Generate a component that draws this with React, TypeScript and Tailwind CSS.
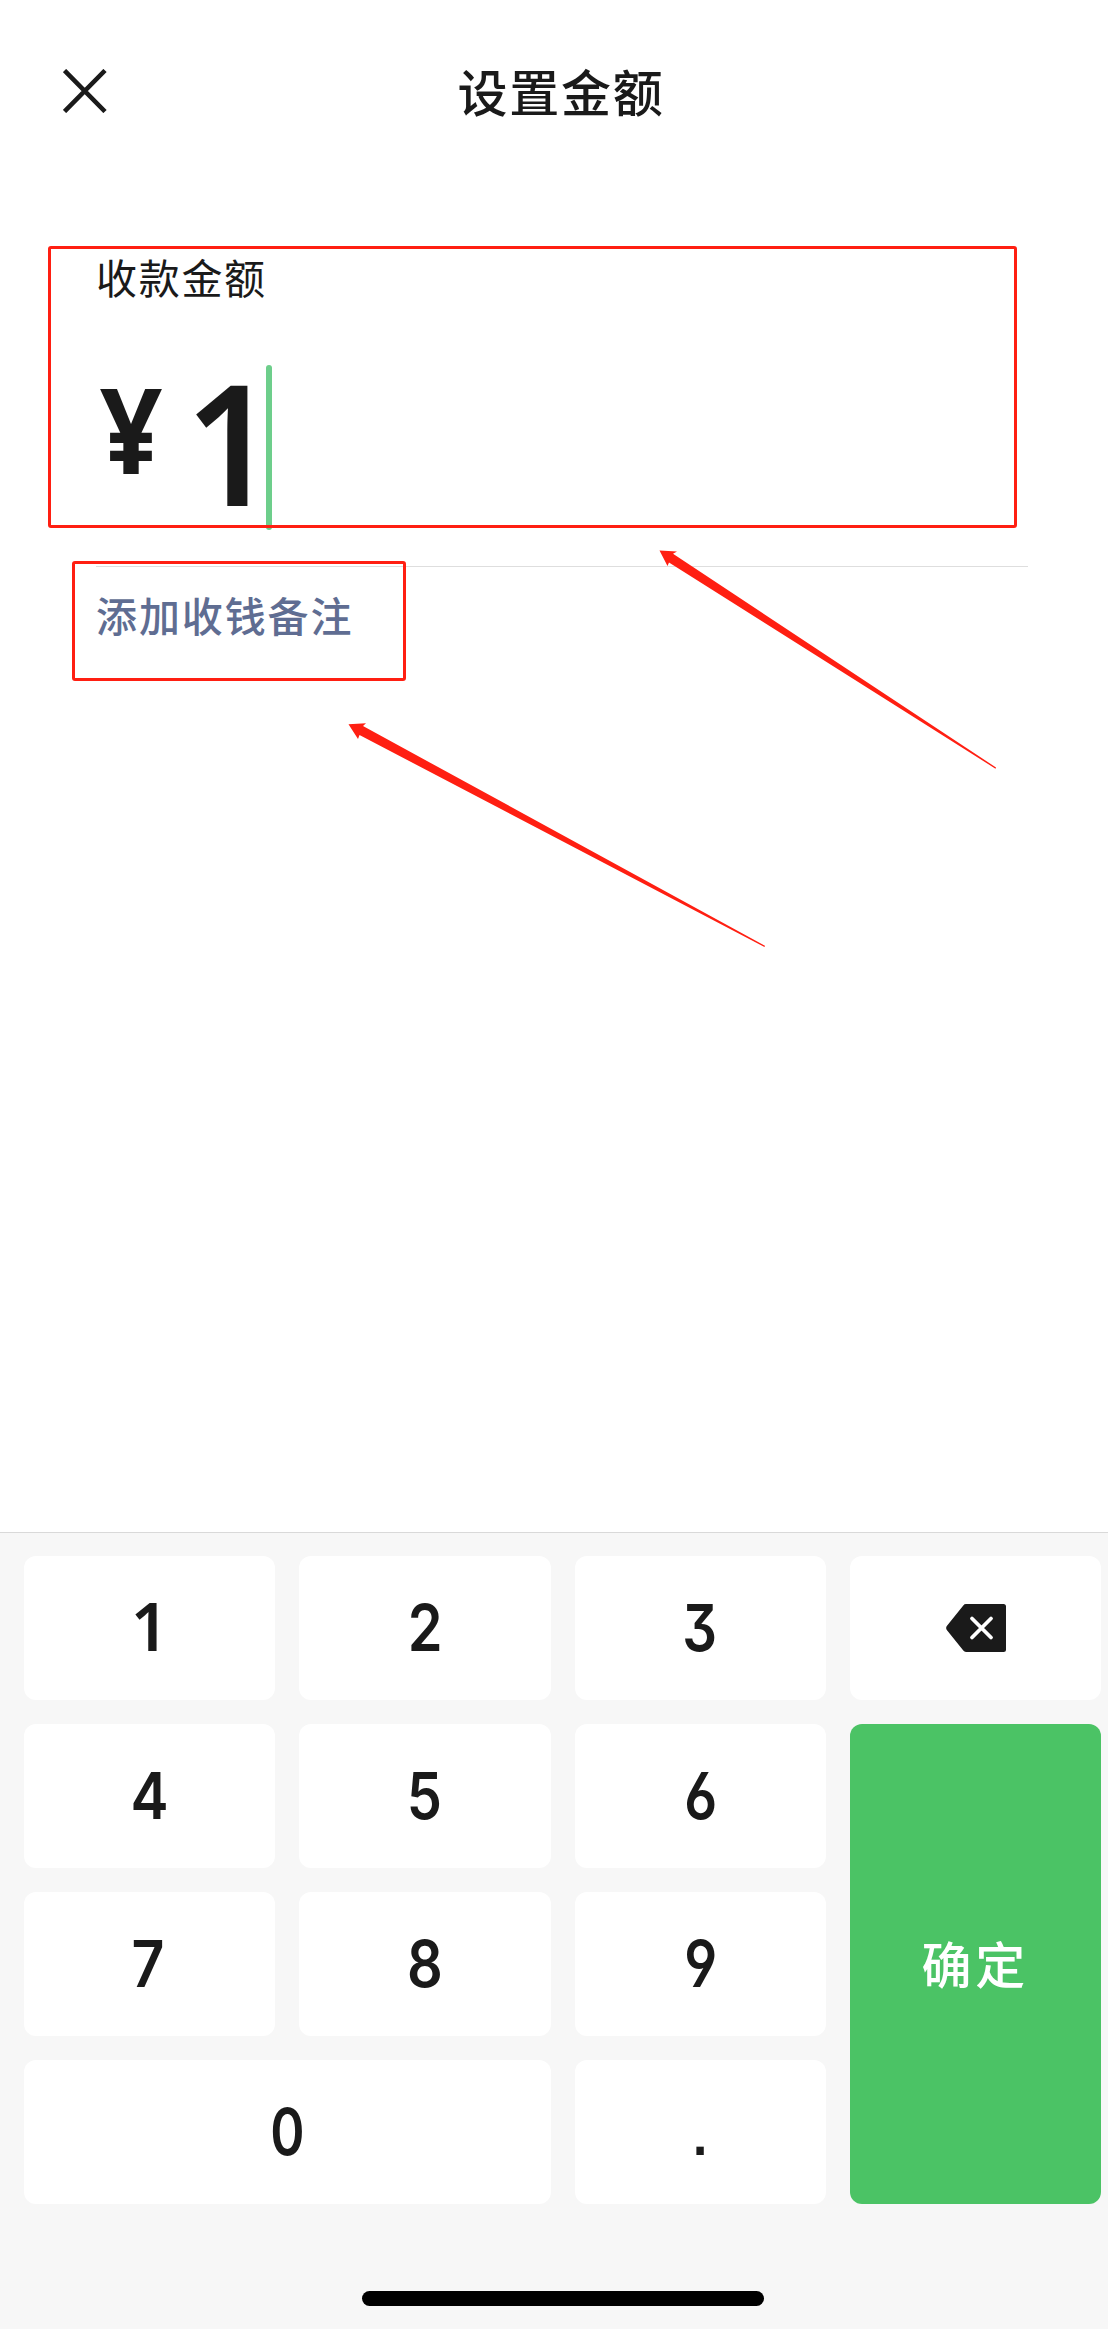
import type { ReactNode } from "react";

const cjk = "font-['Noto_Sans_CJK_SC',sans-serif]";

function CloseIcon() {
  return (
    <svg className="h-[44px] w-[44px]" viewBox="0 0 44 44" fill="none" stroke="#1a1a1a" strokeWidth="4.600">
      <path d="M1.500 1.500 42 42.500M42 1.500 1.500 42.500" />
    </svg>
  );
}

function BackspaceIcon() {
  return (
    <svg className="ml-[2px] h-[48px] w-[60px]" viewBox="0 0 60 48">
      <path
        d="M20 0H57.500Q60 0 60 2.500V45.500Q60 48 57.500 48H20Q18.300 48 17.300 46.600L.8 26Q-.500 24 .8 22L17.300 1.400Q18.300 0 20 0Z"
        fill="#1a1a1a"
      />
      <path d="M26 14.500 45 33.500M45 14.500 26 33.500" stroke="#fff" strokeWidth="3.800" strokeLinecap="round" />
    </svg>
  );
}

function Key({ children, className = "" }: { children: ReactNode; className?: string }) {
  return (
    <button className={`flex h-[144px] items-center justify-center rounded-[12px] bg-white ${className}`}>
      {children}
    </button>
  );
}

function Digit({ children, className = "scale-x-[0.84]" }: { children: ReactNode; className?: string }) {
  return (
    <span
      className={`inline-block pb-px font-['Inter',sans-serif] text-[65px] leading-none font-semibold [font-feature-settings:'cv09','cv03','cv04'] ${className}`}
    >
      {children}
    </span>
  );
}

export default function App() {
  return (
    <div className={`relative flex h-[2329px] w-[1108px] flex-col overflow-hidden bg-white text-[#1a1a1a] ${cjk}`}>
      <header className="grid h-[180px] grid-cols-[1fr_auto_1fr] items-center pl-[14px]">
        <button className="ml-[49px] w-[44px] pt-[2px]">
          <CloseIcon />
        </button>
        <h1 className="text-[50px] leading-none font-medium tracking-[1.800px]">设置金额</h1>
        <span />
      </header>

      <main className="flex flex-1 flex-col pt-[76px] pr-[80px] pl-[96px]">
        <div className="text-[41px] leading-[41px] tracking-[1.700px]">收款金额</div>
        <div className="mt-[68px] flex h-[165px] items-start">
          <span className="w-[89px] origin-left scale-x-[0.93] pl-[4px] font-['Noto_Sans',sans-serif] text-[118px] leading-[127px] font-bold">
            ¥
          </span>
          <span className="w-[81px] origin-left scale-x-[0.95] font-['Noto_Sans',sans-serif] text-[168px] leading-[152px] font-semibold">
            1
          </span>
          <span className="h-[165px] w-[6px] rounded-full bg-[#6dce8b]" />
        </div>
        <div className="mt-[36px] h-px bg-[#dedede]" />
        <a className="mt-[26px] text-[41px] leading-[42px] font-medium tracking-[1.900px] text-[#5f6d92]">添加收钱备注</a>
      </main>

      <section className="h-[797px] border-t border-[#d9d9d9] bg-[#f7f7f7] pt-[23px] pr-[7px] pl-[24px]">
        <div className="grid grid-cols-4 gap-6">
          <Key>
            <span className="pb-[6px] font-['Noto_Sans',sans-serif] text-[66px] leading-none font-semibold">1</span>
          </Key>
          <Key><Digit className="scale-x-[0.86]">2</Digit></Key>
          <Key><Digit>3</Digit></Key>
          <Key><BackspaceIcon /></Key>
          <Key><Digit className="scale-x-[0.88]">4</Digit></Key>
          <Key><Digit className="scale-x-[0.86]">5</Digit></Key>
          <Key><Digit>6</Digit></Key>
          <button className="row-span-3 flex items-center justify-center rounded-[12px] bg-[#4bc365] pb-[5px] text-[50px] leading-none font-medium tracking-[4px] text-white">
            确定
          </button>
          <Key><Digit className="scale-x-[0.88] pr-[3px]">7</Digit></Key>
          <Key><Digit className="scale-x-[0.86]">8</Digit></Key>
          <Key><Digit>9</Digit></Key>
          <Key className="col-span-2"><Digit className="scale-x-[0.8]">0</Digit></Key>
          <Key>
            <span className="pb-[8px] font-['Liberation_Sans',sans-serif] text-[78px] leading-none">.</span>
          </Key>
        </div>
        <div className="mt-[87px] ml-[338px] h-[15px] w-[402px] rounded-full bg-black" />
      </section>

      {/* Callouts over the form: two frames and two arrows */}
      <div className="absolute top-[246px] left-[48px] h-[282px] w-[969px] rounded-[3px] border-3 border-[#ff1f12]" />
      <div className="absolute top-[561px] left-[72px] h-[120px] w-[334px] rounded-[3px] border-3 border-[#ff1f12]" />
      <svg className="absolute top-[540px] left-[340px] h-[420px] w-[670px]" viewBox="340 540 670 420" fill="#ff1f12">
        <path d="M659.500 550.500 677 551.500 673 553.800 996 767.500 995.500 768.700 669 562.500 667.500 566Z" />
        <path d="M348.500 724.200 366 723.300 363 726 765 945.800 764.500 947 359.500 735 358 739Z" />
      </svg>
    </div>
  );
}
